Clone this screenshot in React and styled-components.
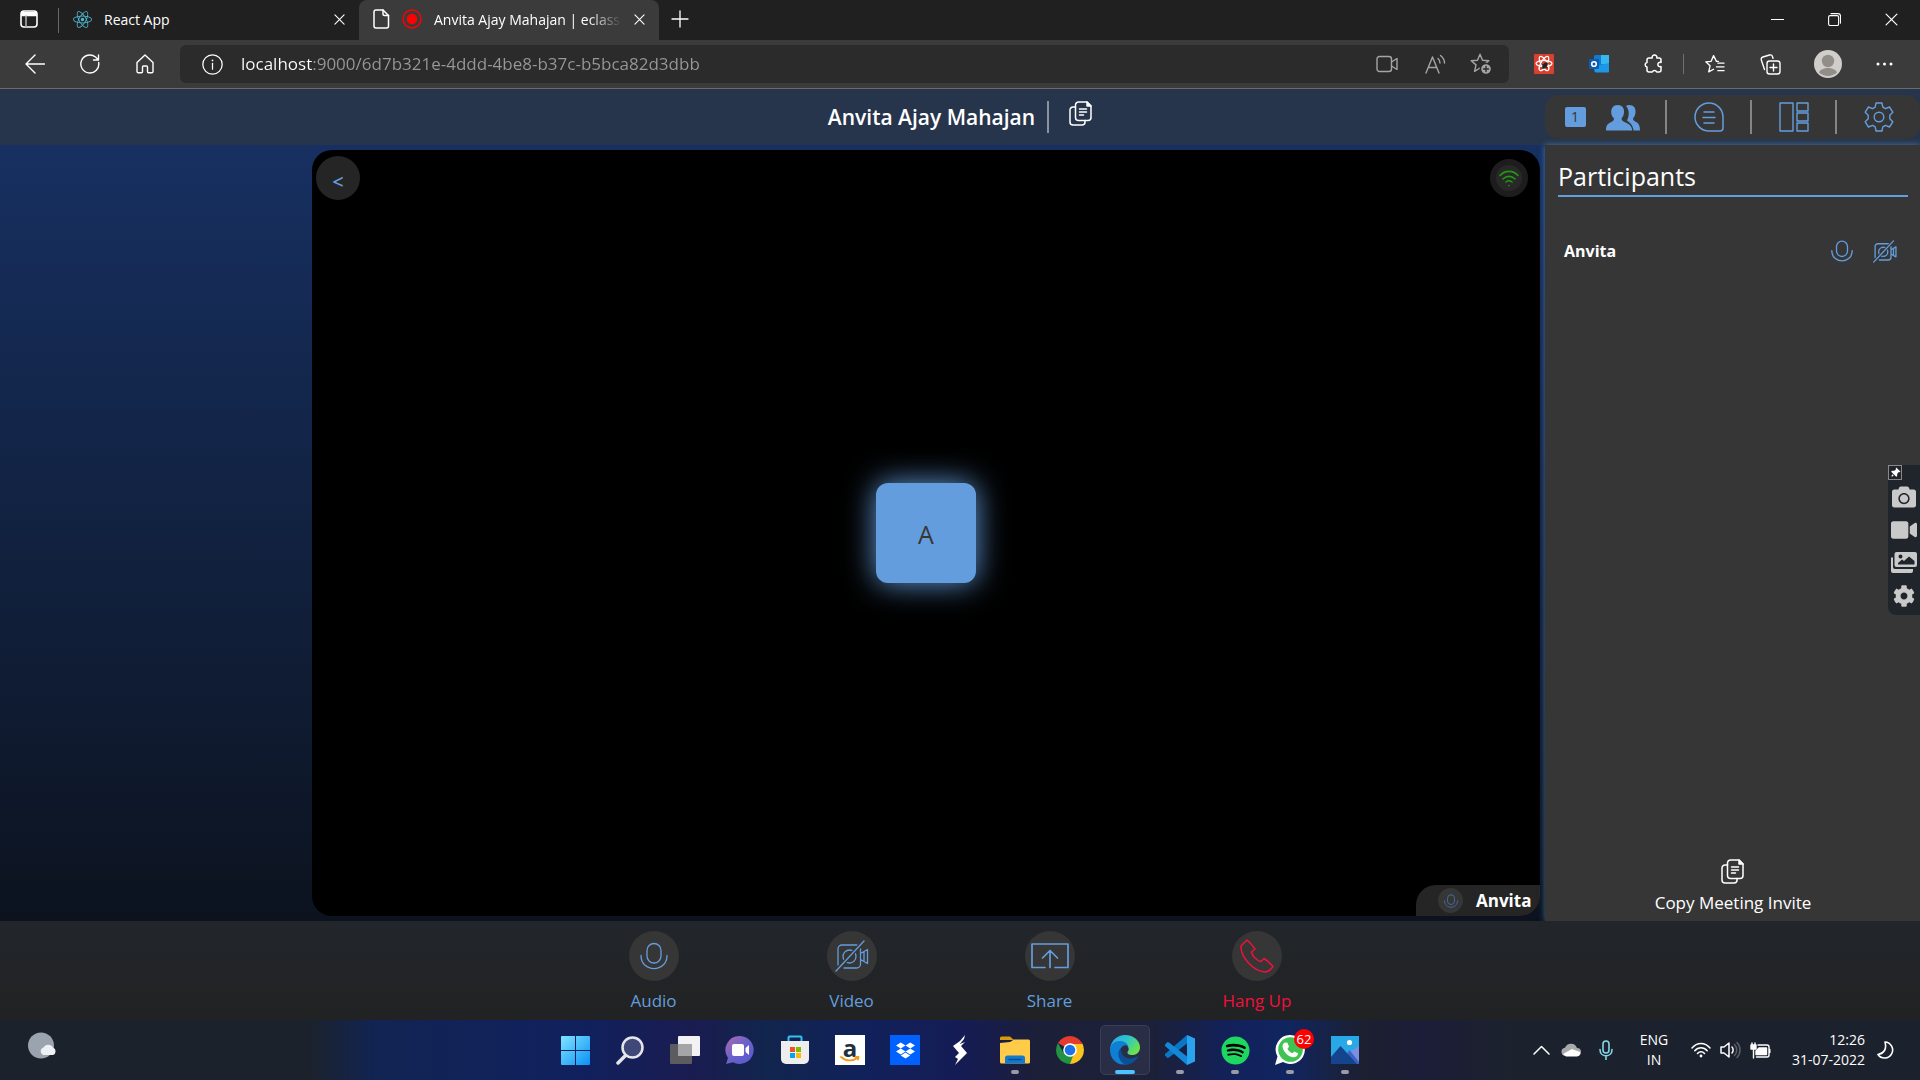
import React from "react";
import styled, { createGlobalStyle, css } from "styled-components";
import { FaReact, FaSpotify, FaDropbox, FaCamera, FaVideo, FaCog } from "react-icons/fa";
import { FaThumbtack } from "react-icons/fa6";

const blue = "#649ddd";

const GlobalStyle = createGlobalStyle`
  * { box-sizing: border-box; }
  body { margin: 0; background: #202020; font-family: "Open Sans", "Noto Sans", sans-serif; color: #fff; }
  button { font: inherit; color: inherit; background: none; border: 0; padding: 0; cursor: pointer; }
  svg { display: block; flex: none; }
  h1, h2, p, ul { margin: 0; padding: 0; }
`;

/* ---------- icons ---------- */

const Icon = ({ size = 20, w, h, box = "0 0 24 24", stroke = 1.4, color = "currentColor", fill = "none", children }) => (
  <svg width={w || size} height={h || size} viewBox={box} fill={fill} stroke={color} strokeWidth={stroke}
    strokeLinecap="round" strokeLinejoin="round" aria-hidden="true">{children}</svg>
);

const WorkspaceIcon = () => (
  <Icon size={18} box="0 0 18 18" stroke={1.6}><rect x="1" y="1" width="16" height="16" rx="3" /><path d="M2 2.500h14v3H2z" fill="currentColor" /><path d="M6 6v10.500" stroke="#aaa" /></Icon>
);
const CloseIcon = ({ size = 11, stroke = 1.2 }) => <Icon size={size} box="0 0 12 12" stroke={stroke}><path d="M1 1l10 10M11 1L1 11" /></Icon>;
const PageIcon = () => <Icon w={17} h={20} box="0 0 17 20" stroke={1.5}><path d="M3 1h7l5.500 5.500V17a2 2 0 0 1-2 2H3a2 2 0 0 1-2-2V3a2 2 0 0 1 2-2z" /><path d="M10 1v4a1.500 1.500 0 0 0 1.500 1.500h4" /></Icon>;
const RecordIcon = () => <Icon size={20} box="0 0 20 20" color="#f00"><circle cx="10" cy="10" r="9" /><circle cx="10" cy="10" r="4.600" fill="#f00" /></Icon>;
const PlusIcon = () => <Icon size={18} box="0 0 18 18" stroke={1.3}><path d="M9 1v16M1 9h16" /></Icon>;
const BackIcon = () => <Icon size={20} box="0 0 20 20" stroke={1.4}><path d="M10 1L1 10l9 9M1 10h18.500" /></Icon>;
const ReloadIcon = () => <Icon size={20} box="0 0 20 20" stroke={1.4}><path d="M18.700 8.500A9 9 0 1 1 15.500 3L18 5.500M18.500 1v5h-5" /></Icon>;
const HomeIcon = () => <Icon w={18} h={20} box="0 0 18 20" stroke={1.4}><path d="M1 8.500L9 1l8 7.500V17.500a1.200 1.200 0 0 1-1.200 1.200H12.500a1 1 0 0 1-1-1V13a1 1 0 0 0-1-1h-3a1 1 0 0 0-1 1v4.700a1 1 0 0 1-1 1H2.200A1.200 1.200 0 0 1 1 17.500z" /></Icon>;
const InfoIcon = () => <Icon size={21} box="0 0 20 20" stroke={1.2}><circle cx="10" cy="10" r="9.200" /><path d="M10 9v5.500" /><path d="M10 6v.100" stroke="#fff" strokeWidth="1.600" /></Icon>;
const CamOutline = () => <Icon w={22} h={18} box="0 0 22 18" stroke={1.4}><rect x="1" y="1.500" width="14.500" height="15" rx="2.500" /><path d="M15.500 7l5.500-3.500v11L15.500 11" /></Icon>;
const ReadAloudIcon = () => <Icon size={21} box="0 0 21 21" stroke={1.4}><path d="M1 19L7.500 3 14 19M3.500 13.500h8" /><path d="M13 4.500c1.400 1.200 2 2.500 2 4.500M15.500 1.500c2.500 2 4 4.500 4 7.500" /></Icon>;
const star = "M10 1.200l2.500 6 6.300.5-4.800 4.200 1.400 6.400L10 15l-5.400 3.300L6 11.900 1.200 7.700l6.300-.5z";
const StarAddIcon = () => <Icon size={22} box="0 0 22 22" stroke={1.4}><path d={star} /><circle cx="16" cy="16" r="5.500" fill="#a5a5a5" stroke="#2b2b2b" /><path d="M16 13.500v5M13.500 16h5" stroke="#2b2b2b" /></Icon>;
const ReactExtIcon = () => <Icon size={20} box="0 0 20 20" stroke={1.2} color="#fff"><rect width="20" height="20" rx="1" fill="#d9402f" stroke="none" /><ellipse cx="10" cy="9.500" rx="8" ry="3" /><ellipse cx="10" cy="9.500" rx="8" ry="3" transform="rotate(60 10 9.500)" /><ellipse cx="10" cy="9.500" rx="8" ry="3" transform="rotate(120 10 9.500)" /><ellipse cx="11" cy="11.500" rx="1.500" ry="3" transform="rotate(35 11 11.500)" fill="#222" stroke="#222" /><path d="M7.500 10l6 4M8.500 14l5-5" stroke="#222" strokeWidth=".8" /></Icon>;
const OutlookIcon = () => <Icon size={20} box="0 0 20 20" stroke={1.6} color="none"><rect x="5" y="1" width="15" height="17" rx="1.500" fill="#1379ce" /><path d="M12 1h8v9h-8z" fill="#35b8f1" /><path d="M6 12l14-3v8.500a1 1 0 0 1-1 1H7a1 1 0 0 1-1-1z" fill="#1c98e6" /><rect y="5" width="10" height="10" rx="1" fill="#0a5cb0" /><circle cx="5" cy="10" r="2.300" stroke="#fff" /></Icon>;
const PuzzleIcon = () => <Icon size={20} box="0 0 20 20" stroke={1.500}><path d="M5 4h3.200a2.400 2.400 0 1 1 4.600 0H15a2 2 0 0 1 2 2v2.500a2.200 2.200 0 1 0 0 4V16a2 2 0 0 1-2 2h-2.300a2.400 2.400 0 0 0-4.400 0H5a2 2 0 0 1-2-2v-3a2.300 2.300 0 0 1 0-4.500V6a2 2 0 0 1 2-2z" /></Icon>;
const FavIcon = () => <Icon size={20} box="0 0 21 20" stroke={1.4}><path d="M14 7.300l-2-.1L9 1.200 6.500 7.200.8 7.700l4.500 4.200-1.400 6.400L9 15.500" /><path d="M13.500 9h6.500M12 13h8M13.500 17H20" /></Icon>;
const CollectionsIcon = () => <Icon size={21} box="0 0 21 21" stroke={1.400}><rect x="7" y="7" width="13" height="13" rx="2.500" /><path d="M13.500 10v7M10 13.500h7M4.500 15.500L1.300 6a2.500 2.500 0 0 1 1.600-3L9.500 1a2.500 2.500 0 0 1 3 1.600l.5 1.700" /></Icon>;
const AvatarIcon = () => <Icon size={28} box="0 0 28 28" color="none"><circle cx="14" cy="14" r="14" fill="#d0cecb" /><circle cx="14" cy="11" r="6.200" fill="#918e8a" /><path d="M5 22.500c2-6 16-6 18 0a13.500 13.500 0 0 1-18 0z" fill="#918e8a" /></Icon>;
const DotsIcon = () => <Icon w={17} h={4} box="0 0 17 4" color="none" fill="#fff"><circle cx="2" cy="2" r="1.500" /><circle cx="8.500" cy="2" r="1.500" /><circle cx="15" cy="2" r="1.500" /></Icon>;
const MinimizeIcon = () => <Icon w={13} h={13} box="0 0 13 13" stroke={1}><path d="M0 6.500h13" /></Icon>;
const RestoreIcon = () => <Icon w={13} h={13} box="0 0 13 13" stroke={1.100}><rect x=".6" y="2.600" width="10" height="10" rx="1.500" /><path d="M3 .6h7a2.500 2.500 0 0 1 2.500 2.500v7" /></Icon>;

const CopyIcon = ({ size = 25 }) => (
  <Icon w={size - 2} h={size} box="0 0 23 25" stroke={1.500}><path d="M9.500 1H18l4 4v11.500a3 3 0 0 1-3 3H9.500a3 3 0 0 1-3-3V4a3 3 0 0 1 3-3z" /><path d="M18 1v4h4z" fill="currentColor" /><path d="M6.500 6H4a3 3 0 0 0-3 3v12a3 3 0 0 0 3 3h9a3 3 0 0 0 3-3v-1.500M10.500 8h7M10.500 11h7M10.500 14h4" /></Icon>
);
const PeopleIcon = () => (
  <Icon w={34} h={27} box="0 0 34 27" color="none" fill={blue}>
    <path d="M23 1c5 0 7 3.500 6.500 7.500-.3 3-1.200 4.500-2.500 6 .2 1.800 1 2.500 3 3.500 3 1.500 4 4 4 8.500h-6.500c-.5-5-3-7.500-6.500-10 1.800-3.500 3.200-10-1-14.500C20.800 1.300 21.800 1 23 1z" />
    <path d="M11.500 1c4.800 0 7 3.500 6.500 7.500-.3 3-1.200 4.500-2.500 6 .2 2 1.200 2.600 3.500 3.700C23.500 20.200 26 22 26.200 26.500H0c0-5 1.500-7 5-8.300 2-.8 2.800-1.500 3-3.700-1.500-1.500-2.600-3-2.800-6C5 4 7.500 1 11.500 1z" />
  </Icon>
);
const ChatIcon = () => <Icon size={30} box="0 0 30 30" color={blue} stroke={1.500}><path d="M15 1a14 14 0 1 0 0 28h11a3 3 0 0 0 3-3V15A14 14 0 0 0 15 1z" /><path d="M10 10h10M9 15.500h12M10 21h10" /></Icon>;
const LayoutIcon = () => <Icon size={30} box="0 0 30 30" color={blue} stroke={1.400}><path d="M1 1h13v28H1zM18 1h11v8H18zM18 11h11v8H18zM18 21h11v8H18z" /></Icon>;
const GearIcon = () => <Icon size={30} box="0 0 30 30" color={blue} stroke={1.400}><path d="M12 1h6l.8 4.200 2.600 1.500L25.500 5l3.300 5.200-3 3v3.600l3 3L25.500 25l-4.100-1.700-2.600 1.500L18 29h-6l-.8-4.200-2.600-1.500L4.500 25l-3.300-5.200 3-3v-3.600l-3-3L4.500 5l4.100 1.700 2.600-1.500z" /><circle cx="15" cy="15" r="4.800" /></Icon>;
const MicIcon = ({ size = 28, color = blue, stroke = 1.300 }) => <Icon size={size} box="0 0 28 28" color={color} stroke={stroke}><rect x="7" y="1.500" width="14" height="19.500" rx="7" /><path d="M1 13.500C1 31 27 31 27 13.500" /></Icon>;
const CamOffIcon = ({ w = 34, h = 32, stroke = 1.300 }) => <Icon w={w} h={h} box="0 0 34 32" color={blue} stroke={stroke}><path d="M3 25V9a4 4 0 0 1 4-4h15M25.500 9v15a4 4 0 0 1-4 4H9M25.500 13.500L32.500 9.500v14l-7-4M29 12v9" /><circle cx="14.500" cy="16.500" r="6.500" /><path d="M1 31L29 1" stroke="#363636" strokeWidth="4" /><path d="M1 31L29 1" /></Icon>;
const ShareIcon = () => <Icon w={38} h={26} box="0 0 38 26" color={blue} stroke={1.700}><path d="M14 24.500H1V1h36v23.500H24M19 24.500V8M11.500 15L19 7.500l7.500 7.500" /></Icon>;
const PhoneIcon = () => <Icon size={34} box="0 0 34 34" color="#f0103c" stroke={1.500}><path d="M1 7l6-6c4 3.500 6 6 8 9l-3.500 3c1 4.500 5 8.500 9.500 9.500l3-3c3.500 2 6 4.500 9 8-2.500 3.500-4.500 5.500-8 5.500C13 32 .5 18 1 7z" /></Icon>;
const SignalIcon = () => <Icon w={20} h={17} box="0 0 20 17" color="#219a10" stroke={1.600}><path d="M1 5.500C6 0 14 0 19 5.500M4 9C7.500 5.500 12.500 5.500 16 9M7 12c2-1.700 4-1.700 6 0M10 15.500v.1" /></Icon>;
const GalleryIcon = () => <Icon w={26} h={21} box="0 0 26 21" color="none" fill="#c9c9c9"><path fillRule="evenodd" d="M5.500 0H24a2 2 0 0 1 2 2v11a2 2 0 0 1-2 2H5.500a2 2 0 0 1-2-2V2a2 2 0 0 1 2-2zM7 12.500h16.500V9L18 4.500l-5 4.500-2-1.500-4 3.500zM9.500 2.500a2 2 0 1 0 0 4 2 2 0 0 0 0-4z" /><path d="M0 5.500h2V15a2 2 0 0 0 2 2h18v2a2 2 0 0 1-2 2H2a2 2 0 0 1-2-2z" /></Icon>;

/* ---------- browser chrome ---------- */

const Screen = styled.div`min-height: 100vh; display: flex; flex-direction: column; overflow: hidden;`;

const TabStrip = styled.div`display: flex; height: 40px; background: #202020; align-items: stretch;`;
const StripButton = styled.button`width: ${p => p.$w}px; height: 38px; display: flex; align-items: center; justify-content: center;`;
const Tab = styled.div`
  width: 300px; display: flex; align-items: center; gap: 12px; padding: 0 14px 2px; font-size: 14px;
  border-radius: 8px 8px 0 0; background: ${p => (p.$active ? "#3b3b3b" : "none")};
`;
const TabTitle = styled.span`
  flex: 1; white-space: nowrap;
  ${p => p.$fade && css`mask-image: linear-gradient(90deg, #000 82%, transparent);`}
`;
const StripDivider = styled.span`width: 1px; height: 25px; align-self: center; background: #686868;`;
const Spacer = styled.div`flex: 1;`;

const Toolbar = styled.div`
  display: flex; align-items: center; height: 49px; background: #3b3b3b; border-bottom: 1px solid #6b6b6b;
  padding: 0 8px 0 7px;
`;
const ToolButton = styled.button`width: ${p => p.$w || 55}px; height: 38px; display: flex; align-items: center; justify-content: center;`;
const AddressBar = styled.div`
  flex: 1; display: flex; align-items: center; height: 38px; margin: 0 12px 0 8px; padding: 0 6px 0 22px;
  border-radius: 6px; background: #2b2b2b; color: #a5a5a5;
`;
const AddressInput = styled.input`
  flex: 1; min-width: 0; margin-left: 18px; padding: 0; border: 0; outline: 0; font: 17px/24px "Open Sans", sans-serif;
  color: transparent; background: linear-gradient(90deg, #fff 71px, #989898 71px); background-clip: text; -webkit-background-clip: text;
`;
const InfoButton = styled.button`color: #fff;`;
const ToolDivider = styled.span`width: 1px; height: 20px; background: #707070; margin: 0 6px;`;

const BrowserChrome = () => (
  <header>
    <TabStrip>
      <StripButton $w={58} aria-label="Tab actions"><WorkspaceIcon /></StripButton>
      <StripDivider />
      <Tab><FaReact size={19} color="#4fb8cf" /><TabTitle>React App</TabTitle><button aria-label="Close tab"><CloseIcon /></button></Tab>
      <Tab $active><PageIcon /><RecordIcon /><TabTitle $fade>Anvita Ajay Mahajan | eclass</TabTitle><button aria-label="Close tab"><CloseIcon /></button></Tab>
      <StripButton $w={42} aria-label="New tab"><PlusIcon /></StripButton>
      <Spacer />
      <StripButton $w={57} aria-label="Minimize"><MinimizeIcon /></StripButton>
      <StripButton $w={57} aria-label="Restore"><RestoreIcon /></StripButton>
      <StripButton $w={57} aria-label="Close"><CloseIcon size={13} stroke={1.100} /></StripButton>
    </TabStrip>
    <Toolbar>
      <ToolButton aria-label="Back"><BackIcon /></ToolButton>
      <ToolButton aria-label="Reload"><ReloadIcon /></ToolButton>
      <ToolButton aria-label="Home"><HomeIcon /></ToolButton>
      <AddressBar>
        <InfoButton aria-label="Site information"><InfoIcon /></InfoButton>
        <AddressInput aria-label="Address" defaultValue="localhost:9000/6d7b321e-4ddd-4be8-b37c-b5bca82d3dbb" />
        <ToolButton $w={48} aria-label="Camera in use"><CamOutline /></ToolButton>
        <ToolButton $w={48} aria-label="Read aloud"><ReadAloudIcon /></ToolButton>
        <ToolButton $w={44} aria-label="Add to favourites"><StarAddIcon /></ToolButton>
      </AddressBar>
      <ToolButton $w={46} aria-label="React tools"><ReactExtIcon /></ToolButton>
      <ToolButton $w={64} aria-label="Outlook"><OutlookIcon /></ToolButton>
      <ToolButton $w={46} aria-label="Extensions"><PuzzleIcon /></ToolButton>
      <ToolDivider />
      <ToolButton $w={50} aria-label="Favourites"><FavIcon /></ToolButton>
      <ToolButton $w={60} aria-label="Collections"><CollectionsIcon /></ToolButton>
      <ToolButton $w={56} aria-label="Profile"><AvatarIcon /></ToolButton>
      <ToolButton $w={56} aria-label="More"><DotsIcon /></ToolButton>
    </Toolbar>
  </header>
);

/* ---------- meeting ---------- */

const Meeting = styled.div`
  flex: 1; display: grid; grid-template-columns: 312px minmax(0, 1fr) 375px;
  grid-template-rows: 56px minmax(0, 1fr) 99px; background: linear-gradient(#173061 56px, #0c131f calc(100% - 99px));
`;
const TopBar = styled.header`
  grid-column: 1 / -1; display: grid; grid-template-columns: 375px minmax(0, 1fr) 375px; align-items: center; background: #26354b;
`;
const TitleGroup = styled.div`grid-column: 2; display: flex; align-items: center; justify-content: center; gap: 12px;`;
const Title = styled.h1`font-size: 21px; line-height: 32px; font-weight: 600;`;
const TitleDivider = styled.span`width: 2px; height: 32px; background: #8a93a0; margin-right: 8px;`;
const TitleCopy = styled.button`padding-bottom: 8px;`;
const PanelSwitch = styled.nav`display: flex; height: 44px; border-radius: 14px; background: #363636; align-items: center;`;
const SwitchButton = styled.button`
  flex: ${p => (p.$wide ? "0 0 120px" : "1")}; height: 34px; display: flex; align-items: center; justify-content: center; gap: 20px;
  padding-right: ${p => (p.$wide ? 6 : 0)}px;
  & + & { border-left: 2px solid #858585; }
`;
const Count = styled.span`width: 21px; height: 20px; border-radius: 2px; background: ${blue}; color: #363636; font-size: 14px; line-height: 20px;`;

const Stage = styled.main`
  grid-column: 2; margin: 5px; margin-left: 0; border-radius: 20px; overflow: hidden; background: #000;
  display: grid; grid-template-rows: 1fr auto 1fr;
`;
const StageTop = styled.div`display: flex; justify-content: space-between; align-items: flex-start; padding: 6px 12px 0 4px;`;
const RoundBack = styled.button`width: 44px; height: 44px; border-radius: 50%; background: #252525; color: ${blue}; font-size: 20px; font-weight: 600; line-height: 44px; padding-top: 4px;`;
const Signal = styled.div`
  width: 38px; height: 38px; margin-top: 3px; border: 6px solid #1d1d1d; border-radius: 50%; background: #282828;
  display: flex; align-items: center; justify-content: center;
`;
const Avatar = styled.div`
  width: 100px; height: 100px; justify-self: center; border-radius: 12px; background: ${blue}; color: #363636;
  font-size: 25px; line-height: 102px; text-align: center; box-shadow: 0 0 30px ${blue};
`;
const NameTag = styled.div`
  justify-self: end; align-self: end; display: flex; align-items: center; gap: 13px; width: 124px; height: 31px; padding-left: 22px;
  border-top-left-radius: 20px; background: #252525; font-size: 17px; line-height: 33px; font-weight: 700;
`;
const MicDot = styled.span`width: 25px; height: 25px; border-radius: 50%; background: #363636; display: flex; align-items: center; justify-content: center;`;

const Sidebar = styled.aside`
  display: flex; flex-direction: column; padding: 12px 12px 6px 13px; background: #363636; box-shadow: 0 0 6px #64a0dd99;
`;
const SidebarTitle = styled.h2`font-size: 25px; font-weight: 400; line-height: 38px; border-bottom: 2px solid ${blue};`;
const People = styled.ul`list-style: none; margin-top: 38px; flex: 1;`;
const Person = styled.li`display: flex; align-items: center; gap: 20px; height: 32px; padding: 0 11px 0 6px; font-size: 16px; font-weight: 700;`;
const PersonName = styled.span`flex: 1;`;
const InviteButton = styled.button`align-self: center; display: flex; flex-direction: column; align-items: center; gap: 7px; font-size: 17px; line-height: 24px;`;

const Controls = styled.footer`
  grid-column: 1 / -1; position: relative; display: flex; justify-content: center; gap: 148px; padding-top: 10px; background: linear-gradient(#22262b, #212223);
`;
const Control = styled.button`
  min-width: 50px; display: flex; flex-direction: column; align-items: center; align-self: flex-start; gap: 8px; font-size: 17px; line-height: 24px;
  color: ${p => (p.$danger ? "#f0103c" : blue)};
`;
const Disc = styled.span`width: 50px; height: 50px; border-radius: 50%; background: #363636; display: flex; align-items: center; justify-content: center;`;

const CaptureTool = styled.div`
  position: absolute; right: 0; top: 465px; width: 32px; height: 150px; border-radius: 6px 0 0 8px; background: #20252b; color: #c9c9c9;
  display: flex; flex-direction: column;
`;
const Pin = styled.button`width: 14px; height: 15px; border: 1px solid #888; color: #fff; display: flex; align-items: center; justify-content: center; svg { transform: rotate(45deg); }`;
const CaptureButton = styled.button`height: 33px; display: flex; align-items: center; justify-content: center;`;

const MeetingView = () => (
  <Meeting>
    <TopBar>
      <TitleGroup>
        <Title>Anvita Ajay Mahajan</Title><TitleDivider />
        <TitleCopy aria-label="Copy title"><CopyIcon /></TitleCopy>
      </TitleGroup>
      <PanelSwitch>
        <SwitchButton $wide aria-label="Participants"><Count>1</Count><PeopleIcon /></SwitchButton>
        <SwitchButton aria-label="Chat"><ChatIcon /></SwitchButton>
        <SwitchButton aria-label="Layout"><LayoutIcon /></SwitchButton>
        <SwitchButton aria-label="Settings"><GearIcon /></SwitchButton>
      </PanelSwitch>
    </TopBar>
    <Stage>
      <StageTop><RoundBack>&lt;</RoundBack><Signal><SignalIcon /></Signal></StageTop>
      <Avatar>A</Avatar>
      <NameTag><MicDot><MicIcon size={14} stroke={2} color="#44699a" /></MicDot>Anvita</NameTag>
    </Stage>
    <Sidebar>
      <SidebarTitle>Participants</SidebarTitle>
      <People>
        <Person><PersonName>Anvita</PersonName><MicIcon size={22} stroke={1.700} /><CamOffIcon w={24} h={23} stroke={1.900} /></Person>
      </People>
      <InviteButton><CopyIcon />Copy Meeting Invite</InviteButton>
    </Sidebar>
    <Controls>
      <Control><Disc><MicIcon /></Disc>Audio</Control>
      <Control><Disc><CamOffIcon /></Disc>Video</Control>
      <Control><Disc><ShareIcon /></Disc>Share</Control>
      <Control $danger><Disc><PhoneIcon /></Disc>Hang Up</Control>
    </Controls>
  </Meeting>
);

/* ---------- taskbar ---------- */

const Taskbar = styled.div`
  display: grid; grid-template-columns: 1fr auto 1fr; align-items: center; height: 60px;
  background: linear-gradient(90deg, #1c222b 0, #1c222b 16%, #112452 19.500%, #10215e 30%, #1a1c50 36%, #11254d 40%, #11215b 45%, #151c55 50%, #1b1f38 54%, #1c2038 60%, #12215a 64%, #102560 67%, #1c2030 71%, #1c1d38 74%, #1c222d 79%);
`;
const Weather = styled.button`justify-self: start; padding: 0 28px 10px;`;
const Apps = styled.div`display: flex; gap: 5px;`;
const AppButton = styled.button`
  position: relative; width: 50px; height: 50px; border-radius: 5px; display: flex; align-items: center; justify-content: center;
  border: 1px solid ${p => (p.$state === "active" ? "#3a3f59" : "transparent")}; background: ${p => (p.$state === "active" ? "#2a2d46" : "none")};
  ${p => p.$state && css`
    &::after { content: ""; position: absolute; bottom: 0; width: ${p.$state === "active" ? 20 : 8}px; height: 4px; border-radius: 2px; background: ${p.$state === "active" ? "#4cc2ff" : "#9a9ba6"}; }
  `}
`;
const Tile = styled.span`width: 30px; height: 30px; display: flex; flex-direction: column; align-items: center; justify-content: center; background: ${p => p.$bg}; color: ${p => p.$fg}; font-size: 24px; line-height: 17px; font-weight: 700;`;
const Unread = styled.span`position: absolute; right: 0; top: 3px; width: 20px; height: 20px; border-radius: 50%; background: #f00; font-size: 13px; line-height: 20px;`;
const Tray = styled.div`display: flex; justify-content: flex-end; align-items: center; padding-right: 25px; font-size: 14px; line-height: 20px;`;
const TrayButton = styled.button`display: flex; align-items: center; justify-content: ${p => p.$align || "center"}; gap: 9px; text-align: ${p => p.$text || "center"}; width: ${p => p.$w}px; height: 48px;`;

const WindowsLogo = () => (
  <Icon size={29} box="0 0 29 29" color="none"><defs><linearGradient id="win" x1="0" y1="0" x2="29" y2="29" gradientUnits="userSpaceOnUse"><stop stopColor="#80e4ff" /><stop offset="1" stopColor="#0a91f5" /></linearGradient></defs><path fill="url(#win)" d="M1 0h13v14H0V1a1 1 0 0 1 1-1zM15 0h13a1 1 0 0 1 1 1v13H15zM0 15h14v14H1a1 1 0 0 1-1-1zM15 15h14v13a1 1 0 0 1-1 1H15z" /></Icon>
);
const SearchLogo = () => <Icon size={29} box="0 0 29 29" color="#e6e6ea"><path d="M2 27l7-7" strokeWidth="3.500" /><circle cx="16.500" cy="11.500" r="10" fill="#3f4878" strokeWidth="2.500" /></Icon>;
const TaskViewLogo = () => <Icon size={30} box="0 0 30 30" color="none"><rect x="8" y="1" width="22" height="20" rx="1" fill="#f2f2f4" /><rect y="9" width="22" height="20" rx="1" fill="#5c5c5e" /><rect x="8" y="9" width="14" height="12" fill="#a5a5a7" /></Icon>;
const ChatLogo = () => <Icon size={30} box="0 0 30 30" color="none"><defs><linearGradient id="chat" x1="0" y1="0" x2="1" y2="1"><stop stopColor="#b06ab0" /><stop offset=".5" stopColor="#6a62c8" /><stop offset="1" stopColor="#5558cf" /></linearGradient></defs><path d="M15 1a14 14 0 1 1-7 26.300L1 29l2-6A14 14 0 0 1 15 1z" fill="url(#chat)" /><rect x="7" y="9" width="12" height="12" rx="2" fill="#fff" /><path d="M20.500 13l3.500-3v10l-3.500-3z" fill="#fff" /></Icon>;
const StoreLogo = () => <Icon size={30} box="0 0 30 30" color="none"><path d="M8.500 6V2.500a1 1 0 0 1 1-1h11a1 1 0 0 1 1 1V6" stroke="#33c1f5" strokeWidth="2" /><path d="M1 6h28v18a5 5 0 0 1-5 5H6a5 5 0 0 1-5-5z" fill="#eeeeef" /><path d="M10 12h5v5h-5z" fill="#f25022" /><path d="M16 12h5v5h-5z" fill="#7fba00" /><path d="M10 18h5v5h-5z" fill="#00a4ef" /><path d="M16 18h5v5h-5z" fill="#ffb900" /></Icon>;
const SmileIcon = () => <Icon w={20} h={6} box="0 0 20 6" color="#f79a1c" stroke={1.800}><path d="M1 1c5 4.500 12 4.500 17 .5M15.500 1H18.500l-.5 2.500" /></Icon>;
const BoltLogo = () => <Icon w={14} h={30} box="0 0 14 30" color="none" fill="#fff"><path d="M12 0L7 6l-1 4 5-6zM7 6L0 11l6 7-4 4 3 2-3 6 6-6 6-6-6-7 4-4-5 2z" /></Icon>;
const FolderLogo = () => <Icon size={30} box="0 0 30 30" color="none"><path d="M0 3a1.500 1.500 0 0 1 1.500-1.500H10L14 5H0z" fill="#d99a0d" /><path d="M0 8l10-1 4-2.500h14.500A1.500 1.500 0 0 1 30 6v21a1.500 1.500 0 0 1-1.500 1.500h-27A1.500 1.500 0 0 1 0 27z" fill="#ffcb48" /><path d="M5 28.500V23a2.500 2.500 0 0 1 2.500-2.500h15A2.500 2.500 0 0 1 25 23v5.500z" fill="#1279cc" /><path d="M9 24.500h12" stroke="#0a4f8f" /></Icon>;
const ChromeLogo = () => <Icon size={28} box="0 0 28 28" color="none"><path d="M14 14L1.900 7A14 14 0 0 1 26.100 7z" fill="#e33b2e" /><path d="M14 14L26.100 7A14 14 0 0 1 14 28z" fill="#fcc31e" /><path d="M14 28A14 14 0 0 1 1.900 7L8 17.500 14 20.500l3-.5z" fill="#229342" /><path d="M14 7h12.100L20 17.500z" fill="#fcc31e" /><path d="M1.900 7H26v1H14z" fill="#e33b2e" /><circle cx="14" cy="14" r="6.800" fill="#fff" /><circle cx="14" cy="14" r="5.300" fill="#1a73e8" /></Icon>;
const EdgeLogo = () => (
  <Icon size={30} box="0 0 30 30" color="none"><defs><linearGradient id="edge" x1="0" y1="0" x2="1" y2=".6"><stop stopColor="#28a8ea" /><stop offset=".5" stopColor="#2cc3d0" /><stop offset="1" stopColor="#6ce34a" /></linearGradient></defs>
    <path d="M0 14C1 5.500 7.500 0 15 0c9 0 15 6 15 12.500 0 5-4 7.500-7.500 7.500-4 0-5.500-1.500-5-3 1-1.300 1.500-2.500 1-4C17 6 4 6 0 14z" fill="url(#edge)" /><path d="M0 15c0-6 5-9.500 10.500-9 4.500.3 7.500 3 8 6-2-2.500-5-2-7 .5C7 18 10.500 28 19 28.500 9 32.500 0 25 0 15z" fill="#0f7fd4" /><path d="M11.500 12.500C9.500 17.500 14 24 21 23.500c2.500-.2 4.500-1.200 6-2 .8-.4 1.200.3.700 1C25.500 26 21.500 29.500 16 30 8 27 6 16 11.500 12.500z" fill="#0b4f94" /></Icon>
);
const CodeLogo = () => <Icon size={30} box="0 0 30 30" color="none"><path d="M22 0l8 3.500v23L22 30z" fill="#2aa3ef" /><path d="M22 0v8.500L4 22.500 2.500 23 0 20.500V19z" fill="#0b76c4" /><path d="M22 30v-8.500L4 7.500 2.500 7 0 9.500V11z" fill="#1387d8" /></Icon>;
const SpotifyLogo = () => <Icon size={29} box="0 0 29 29" color="none"><circle cx="14.500" cy="14.500" r="12" fill="#000" /><FaSpotify size={29} color="#1ed760" /></Icon>;
const WhatsAppLogo = () => <Icon size={30} box="0 0 30 30" color="none"><path d="M15.500 0A14.500 14.500 0 1 1 8 27L0 30l2.500-8.500A14.500 14.500 0 0 1 15.500 0z" fill="#fff" /><circle cx="15.500" cy="14.500" r="12.300" fill="#3fc351" /><path d="M10 7.500l2.500.3 1.500 4-1.600 1.900c1.200 2.300 2.700 3.600 5 4.600l1.900-1.900 3.700 1.900c0 3-2.500 4.200-5 4C12.500 21.500 8 16 7.500 11.500 7.500 9.500 8.500 8 10 7.500z" fill="#fff" /></Icon>;
const PhotosLogo = () => <Icon size={28} box="0 0 28 28" color="none"><path d="M0 0h28v28H0z" fill="#29a8e8" /><path d="M20 28V15l8-5v18z" fill="#7d8fe0" /><path d="M10 28l8.500-14L28 26v2z" fill="#3c63c4" /><path d="M0 21L9.500 10 26 28H0z" fill="#13448c" /><circle cx="18.500" cy="6.500" r="2.600" fill="#fff" /></Icon>;

const apps = [
  ["Start", <WindowsLogo />], ["Search", <SearchLogo />], ["Task view", <TaskViewLogo />], ["Chat", <ChatLogo />], ["Store", <StoreLogo />],
  ["Amazon", <Tile $bg="#fff" $fg="#222f3e">a<SmileIcon /></Tile>],
  ["Dropbox", <Tile $bg="#0061fe" $fg="#fff"><FaDropbox size={19} /></Tile>],
  ["Editor", <BoltLogo />], ["Files", <FolderLogo />, "open"], ["Chrome", <ChromeLogo />], ["Edge", <EdgeLogo />, "active"],
  ["Code", <CodeLogo />, "open"], ["Spotify", <SpotifyLogo />, "open"], ["WhatsApp", <WhatsAppLogo />, "open", 62], ["Photos", <PhotosLogo />, "open"],
];

const MoonCloud = () => <Icon w={29} h={27} box="0 0 29 27" color="none"><circle cx="13" cy="13.500" r="13" fill="#9aa3ae" /><path d="M15 23a4 4 0 0 1 .5-7.500 5.500 5.500 0 0 1 9.500 0A4 4 0 0 1 25 23z" fill="#eef1f4" /></Icon>;
const Chevron = () => <Icon w={17} h={10} box="0 0 17 10" stroke={1.500}><path d="M1 9l7.500-7.500L16 9" /></Icon>;
const CloudIcon = () => <Icon w={20} h={14} box="0 0 20 14" color="none"><path d="M4 13a4.200 4.200 0 0 1 0-8.300A6.500 6.500 0 0 1 16 5a4 4 0 0 1 0 8z" fill="#a9a9ab" /><path d="M5 13.500l-3-2.500 9-5 8 3a3.500 3.500 0 0 1-3 4.500z" fill="#fff" /></Icon>;
const TrayMic = () => <Icon w={14} h={20} box="0 0 14 20" color="#86d5e8" stroke={1.600}><rect x="4" y="1" width="6" height="12" rx="3" /><path d="M1 9.500c0 8.500 12 8.500 12 0M7 16v3.500" /></Icon>;
const WifiIcon = () => <Icon w={20} h={16} box="0 0 20 16" stroke={1.500}><path d="M1 6C6 0 14 0 19 6M3.800 8.800c3.500-4 8.900-4 12.400 0M6.500 11.500c2-2.300 5-2.300 7 0" /><circle cx="10" cy="14" r="1.400" fill="#fff" stroke="none" /></Icon>;
const VolumeIcon = () => <Icon w={21} h={18} box="0 0 21 18" stroke={1.500}><path d="M1 6h3l5-4v14l-5-4H1zM12 6c1.500 1.500 1.500 4.500 0 6" /><path d="M14.500 3.500c3 3 3 8 0 11M17 1.500c4 4 4 11 0 15" stroke="#5b6068" /></Icon>;
const BatteryIcon = () => <Icon w={21} h={17} box="0 0 21 17" stroke={1.400}><path d="M8 3h9a2 2 0 0 1 2 2v8a2 2 0 0 1-2 2H6.500M19.800 7.500v3" /><path d="M9 6h7.500v6.500H6V9z" fill="#fff" /><path d="M1 3h5v4H1zM2 1v2M5 1v2M3.500 7v9" fill="#fff" /></Icon>;
const MoonIcon = () => <Icon size={18} box="0 0 18 18" stroke={1.600}><path d="M8 1a8 8 0 1 1-7 12.500C7 12.500 10 8 8 1z" /></Icon>;

const TaskbarView = () => (
  <Taskbar>
    <Weather aria-label="Weather"><MoonCloud /></Weather>
    <Apps>
      {apps.map(([name, icon, state, unread]) => (
        <AppButton key={name} $state={state} aria-label={name}>{icon}{unread && <Unread>{unread}</Unread>}</AppButton>
      ))}
    </Apps>
    <Tray>
      <TrayButton $w={26} aria-label="Hidden icons"><Chevron /></TrayButton>
      <TrayButton $w={34} aria-label="OneDrive"><CloudIcon /></TrayButton>
      <TrayButton $w={36} aria-label="Microphone"><TrayMic /></TrayButton>
      <TrayButton $w={60}>ENG<br />IN</TrayButton>
      <TrayButton $w={94} aria-label="Network, sound, battery"><WifiIcon /><VolumeIcon /><BatteryIcon /></TrayButton>
      <TrayButton $w={87} $align="flex-end" $text="right">12:26<br />31-07-2022</TrayButton>
      <TrayButton $w={30} $align="flex-end" aria-label="Focus"><MoonIcon /></TrayButton>
    </Tray>
  </Taskbar>
);

export default function App() {
  return (
    <Screen>
      <GlobalStyle />
      <BrowserChrome />
      <MeetingView />
      <TaskbarView />
      <CaptureTool>
        <Pin aria-label="Pin"><FaThumbtack size={10} /></Pin>
        <CaptureButton aria-label="Capture image"><FaCamera size={24} /></CaptureButton>
        <CaptureButton aria-label="Capture video"><FaVideo size={26} /></CaptureButton>
        <CaptureButton aria-label="Gallery"><GalleryIcon /></CaptureButton>
        <CaptureButton aria-label="Capture settings"><FaCog size={22} /></CaptureButton>
      </CaptureTool>
    </Screen>
  );
}
